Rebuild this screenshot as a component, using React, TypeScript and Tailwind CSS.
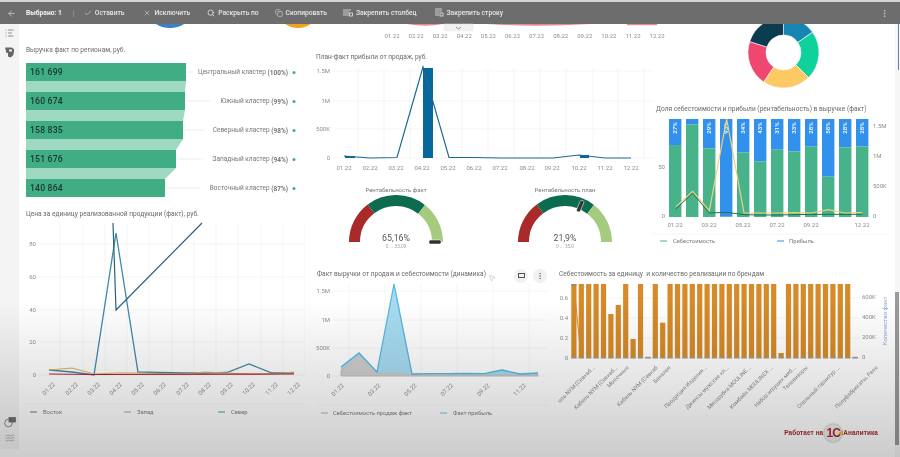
import React from "react";
import { ArrowLeft, Check, Copy, MoreVertical, MousePointer2, Search, Waves, X } from "lucide-react";

const GRID = "#eeeeee";
const TICK = "#8c8c8c";
const MONTHS = ["01.22", "02.22", "03.22", "04.22", "05.22", "06.22", "07.22", "08.22", "09.22", "10.22", "11.22", "12.22"];

const pts = (list: number[][]) => list.map((p) => p.join(",")).join(" ");

const Tick = ({ x, y, children, anchor = "middle", rotate }: { x: number; y: number; children: React.ReactNode; anchor?: "start" | "middle" | "end"; rotate?: number }) => (
  <text x={x} y={y} fontSize={6} fill={TICK} textAnchor={anchor} dominantBaseline="middle" transform={rotate ? `rotate(${rotate} ${x} ${y})` : undefined}>
    {children}
  </text>
);

const Title = ({ children, className = "" }: { children: React.ReactNode; className?: string }) => (
  <div className={`text-[6.6px] leading-[12px] text-[#6a6a6a] whitespace-nowrap ${className}`}>{children}</div>
);

const ToolItem = ({ icon, label, className = "" }: { icon: React.ReactNode; label: string; className?: string }) => (
  <div className={`flex items-center gap-[3px] ${className}`}>
    {icon}
    <span>{label}</span>
  </div>
);

const Toolbar = () => (
  <div className="h-[22px] shrink-0 bg-[#6d6d6d] flex items-center text-[6.7px] font-medium text-[#e6e6e6] whitespace-nowrap">
    <ArrowLeft size={9} strokeWidth={1.6} className="ml-[7px]" />
    <span className="ml-[10px] font-bold text-[#f2f2f2]">Выбрано: 1</span>
    <div className="ml-[11px] h-[7px] w-px bg-[#8a8a8a]" />
    <ToolItem className="ml-[10px]" icon={<Check size={8} strokeWidth={1.5} />} label="Оставить" />
    <ToolItem className="ml-[19px]" icon={<X size={8} strokeWidth={1.5} />} label="Исключить" />
    <ToolItem className="ml-[17px]" icon={<Search size={8} strokeWidth={2.4} />} label="Раскрыть по" />
    <ToolItem className="ml-[16px]" icon={<Copy size={8} strokeWidth={1.5} />} label="Скопировать" />
    <ToolItem
      className="ml-[16px]"
      icon={
        <svg width="10" height="9" viewBox="0 0 10 9" fill="none" stroke="#e6e6e6" strokeWidth="0.8">
          <path d="M1 1v7M3 1v7M5 1v7M7 1v2" />
          <rect x="6.5" y="5" width="3" height="3" />
        </svg>
      }
      label="Закрепить столбец"
    />
    <ToolItem
      className="ml-[17px]"
      icon={
        <svg width="10" height="9" viewBox="0 0 10 9" fill="none" stroke="#e6e6e6" strokeWidth="0.8">
          <path d="M1 1h7M1 3h7M1 5h4M1 7h4" />
          <rect x="6" y="5" width="3" height="3" />
        </svg>
      }
      label="Закрепить строку"
    />
    <MoreVertical size={9} strokeWidth={1.6} className="ml-auto mr-[11px]" />
  </div>
);

const Sidebar = () => (
  <aside className="w-[19px] h-[425px] shrink-0 bg-[#f4f4f4] flex flex-col items-center justify-between pt-[5px] pb-[6px] text-[#777777]">
    <div className="flex flex-col items-center gap-[9px]">
      <svg width="9" height="8" viewBox="0 0 9 8" fill="none" stroke="#777777" strokeWidth="0.8">
        <path d="M3 1h5.5M3 4h4M3 7h5.5M0.5 1h1M0.5 4h1M0.5 7h1" />
      </svg>
      <svg width="11" height="12" viewBox="0 0 11 12" fill="#666666">
        <path d="M1 1.5h6.5l2.5 1.5v3l-1 3.5-2.5 2-2.5-1v-3.5H2.5z" />
        <path d="M5 3.5h3v2H5z" fill="#eeeeee" />
      </svg>
    </div>
    <div className="flex flex-col items-center gap-[5px]">
      <svg width="12" height="11" viewBox="0 0 12 11" fill="none" stroke="#6f6f6f" strokeWidth="0.8">
        <circle cx="4.5" cy="6" r="3.8" />
        <rect x="5" y="0.5" width="6.5" height="4.5" fill="#6f6f6f" />
      </svg>
      <Waves size={10} strokeWidth={1.2} />
    </div>
  </aside>
);

const FUNNEL = [
  { value: "161 699", name: "Центральный кластер", pct: "(100%)", right: 186, lineEnd: 193 },
  { value: "160 674", name: "Южный кластер", pct: "(99%)", right: 185, lineEnd: 210 },
  { value: "158 835", name: "Северный кластер", pct: "(98%)", right: 183, lineEnd: 203 },
  { value: "151 676", name: "Западный кластер", pct: "(94%)", right: 176, lineEnd: 203 },
  { value: "140 864", name: "Восточный кластер", pct: "(87%)", right: 165, lineEnd: 200 },
];

const Funnel = () => (
  <svg viewBox="19 57 286 148" width={286} height={148}>
    {FUNNEL.map((row, i) => {
      const top = 64 + i * 29;
      const next = FUNNEL[i + 1];
      return (
        <g key={row.name}>
          {next && <polygon points={pts([[26, top + 18], [row.right, top + 18], [next.right, top + 29], [26, top + 29]])} fill="#9fd9c2" />}
          <rect x={26} y={top} width={row.right - 26} height={18} fill="#41ad85" />
          <text x={30} y={top + 9.5} fontSize={8.6} fontWeight={500} letterSpacing={0.2} fill="#17362c" dominantBaseline="middle">
            {row.value}
          </text>
          <line x1={row.right + 1} x2={row.lineEnd} y1={top + 9} y2={top + 9} stroke="#e2e2e2" strokeWidth={0.6} />
          <text x={288} y={top + 9.5} fontSize={6.5} fill="#777777" textAnchor="end" dominantBaseline="middle">
            {row.name} <tspan fontWeight={700}>{row.pct}</tspan>
          </text>
          <circle cx={294} cy={top + 9.5} r={1.5} fill="#41ad85" />
        </g>
      );
    })}
  </svg>
);

const PRICE_X = [49, 72, 94, 116, 138, 160, 183, 205, 227, 249, 272, 294];

const Legend = ({ items, y }: { items: { x: number; color: string; label: string; text: number }[]; y: number }) => (
  <>
    {items.map((it) => (
      <g key={it.label}>
        <line x1={it.x} x2={it.x + 7} y1={y} y2={y} stroke={it.color} strokeWidth={1} />
        <text x={it.text} y={y} fontSize={5.8} fill="#7a7a7a" dominantBaseline="middle">
          {it.label}
        </text>
      </g>
    ))}
  </>
);

const PriceChart = () => (
  <svg viewBox="19 221 286 236" width={286} height={236}>
    {[245, 278, 311, 343, 376].map((y, i) => (
      <g key={y}>
        <line x1={38} x2={304} y1={y} y2={y} stroke={GRID} strokeWidth={0.6} />
        <Tick x={36} y={y} anchor="end">{[80, 60, 40, 20, 0][i]}</Tick>
      </g>
    ))}
    {[60, 83, 105, 127, 149, 172, 194, 216, 238, 261, 283, 305].map((x) => (
      <line key={x} x1={x} x2={x} y1={225} y2={376} stroke={GRID} strokeWidth={0.6} />
    ))}
    <polyline fill="none" stroke="#3f8aa8" strokeWidth={1.3} points={pts([[49, 371], [72, 373], [94, 376], [116, 234], [138, 373], [160, 373.5], [183, 374], [205, 374], [227, 373.5], [249, 365], [272, 374], [294, 374]])} />
    <polyline fill="none" stroke="#2c6080" strokeWidth={1.2} points={pts([[113, 224], [116, 311], [202, 224]])} />
    <polyline fill="none" stroke="#e0b45a" strokeWidth={1.2} points={pts([[49, 371], [72, 369], [94, 375], [116, 374], [138, 374], [160, 374.5], [183, 375], [205, 373], [227, 374], [249, 375], [272, 375], [294, 373]])} />
    <polyline fill="none" stroke="#b2203f" strokeWidth={1.2} points={pts([[49, 375], [94, 375.5], [294, 375]])} />
    {MONTHS.map((m, i) => (
      <Tick key={m} x={PRICE_X[i]} y={390} rotate={-45}>{m}</Tick>
    ))}
    <line x1={26} x2={305} y1={405} y2={405} stroke={GRID} strokeWidth={0.6} />
    <Legend
      y={413}
      items={[
        { x: 30, color: "#4f7f9a", label: "Восток", text: 43 },
        { x: 124, color: "#7fb4c8", label: "Запад", text: 137 },
        { x: 218, color: "#4f9a96", label: "Север", text: 231 },
      ]}
    />
  </svg>
);

const TopStrip = () => (
  <svg viewBox="305 24 365 18" width={365} height={18} className="overflow-visible">
    <path d="M407 24q18 3.5 36 0zM487 24q50 3.5 103 0zM627 24h30v1.2h-30z" fill="#e88a8a" />
    <path d="M444 24h29v5a2 2 0 0 1-2 2h-25a2 2 0 0 1-2-2z" fill="#f1f1f1" stroke="#e4e4e4" strokeWidth={0.5} />
    <path d="M456 27l2.5 2 2.5-2" fill="none" stroke="#666666" strokeWidth={0.7} />
    {MONTHS.map((m, i) => (
      <Tick key={m} x={392 + i * 24.1} y={36}>{m}</Tick>
    ))}
  </svg>
);

const PLAN_X = [344, 370, 396, 422, 448, 474, 500, 527, 552, 579, 605, 631];

const PlanChart = () => (
  <svg viewBox="305 63 349 112" width={349} height={112}>
    {[71, 101, 129, 158].map((y, i) => (
      <g key={y}>
        <line x1={333} x2={654} y1={y} y2={y} stroke={GRID} strokeWidth={0.6} />
        <Tick x={330} y={y} anchor="end">{["1.5M", "1M", "500K", "0"][i]}</Tick>
      </g>
    ))}
    {[358, 384, 410, 436, 462, 488, 514, 540, 566, 593, 618, 644].map((x) => (
      <line key={x} x1={x} x2={x} y1={68} y2={158} stroke={GRID} strokeWidth={0.6} />
    ))}
    <rect x={345} y={156} width={10} height={2} fill="#08689c" />
    <rect x={423} y={68} width={10} height={90} fill="#08689c" />
    <rect x={580} y={155} width={9} height={3} fill="#08689c" />
    <polyline fill="none" stroke="#1d6a96" strokeWidth={1.2} points={pts([[344, 156], [370, 158], [397, 157.5], [423, 67], [449, 157.5], [475, 157.5], [501, 158], [527, 158], [553, 158], [579, 155], [605, 158], [631, 158]])} />
    {MONTHS.map((m, i) => (
      <Tick key={m} x={PLAN_X[i]} y={168}>{m}</Tick>
    ))}
  </svg>
);

const arc = (from: number, to: number, r: number, inner: number, cx = 0, cy = 0) => {
  const rad = (a: number) => (a * Math.PI) / 180;
  const p = (a: number, rr: number) => `${(cx + rr * Math.cos(rad(a))).toFixed(2)} ${(cy - rr * Math.sin(rad(a))).toFixed(2)}`;
  const large = Math.abs(from - to) > 180 ? 1 : 0;
  return `M${p(from, r)}A${r} ${r} 0 ${large} 1 ${p(to, r)}L${p(to, inner)}A${inner} ${inner} 0 ${large} 0 ${p(from, inner)}Z`;
};

const Gauge = ({ title, value, range, needle }: { title: string; value: string; range: string; needle: number }) => (
  <div className="w-[110px] shrink-0 flex flex-col items-center">
    <div className="text-[6px] leading-[10px] mt-[1px] text-[#777777] whitespace-nowrap">{title}</div>
    <svg viewBox="-55 -47 110 55" width={110} height={55}>
      <path d={arc(180, 127, 47, 36)} fill="#a82a2b" />
      <path d={arc(127, 52, 47, 36)} fill="#0d6b4f" />
      <path d={arc(52, 0, 47, 36)} fill="#a5cc7e" />
      <rect x={33} y={-2} width={12} height={4} rx={1.5} fill="#333333" stroke="#ffffff" strokeWidth={0.5} transform={`rotate(${-needle})`} />
      <text x={0} y={-3} fontSize={8.8} fill="#555555" textAnchor="middle" dominantBaseline="middle">{value}</text>
      <text x={0} y={4.5} fontSize={4.8} fill="#a8a8a8" textAnchor="middle" dominantBaseline="middle">{range}</text>
    </svg>
  </div>
);

const DONUT = [
  { from: 90, to: 35, color: "#1685b0" },
  { from: 35, to: -45, color: "#0fd19b" },
  { from: -45, to: -124, color: "#fdc964" },
  { from: -124, to: -198, color: "#ef476f" },
  { from: -198, to: -270, color: "#0b3c50" },
];

const Donut = () => (
  <svg viewBox="748 24 71 65" width={71} height={65} className="ml-[98px]">
    {DONUT.map((s) => (
      <path key={s.color} d={arc(s.from, s.to, 35.5, 17.5, 783.5, 52.5)} fill={s.color} stroke="#ffffff" strokeWidth={0.6} />
    ))}
  </svg>
);

const SPLITS = [438, 376, 448, 653, 460, 487, 452, 457, 443, 533, 445, 442];
const SHARE = ["27%", "", "29%", "93%", "34%", "43%", "31%", "33%", "28%", "58%", "28%", "28%"];
const zoom3 = (list: number[][]) => list.map(([x, y]) => [640 + x / 3, y / 3]);

const ShareChart = () => (
  <svg viewBox="650 116 245 134" width={245} height={134}>
    {SPLITS.map((s, i) => {
      const x = 669 + i * 17;
      return (
        <g key={i}>
          <rect x={x} y={120} width={12.4} height={s / 3 - 120} fill="#3391ee" />
          <rect x={x} y={s / 3} width={12.4} height={218 - s / 3} fill="#48b28a" />
          {SHARE[i] && (
            <text x={x + 6.2} y={129} fontSize={6} fontWeight={500} fill="#ffffff" textAnchor="middle" dominantBaseline="middle" transform={`rotate(-90 ${x + 6.2} 129)`}>
              {SHARE[i]}
            </text>
          )}
        </g>
      );
    })}
    <polyline fill="none" stroke="#1f6d58" strokeWidth={1} points={pts(zoom3([[108, 630], [158, 582], [208, 642], [260, 640], [312, 647], [362, 648], [412, 648], [462, 647], [514, 646], [565, 646], [615, 646], [666, 646]]))} />
    <polyline fill="none" stroke="#eed27f" strokeWidth={1.2} points={pts(zoom3([[108, 623], [158, 577], [208, 635], [260, 360], [312, 642], [362, 642], [412, 642], [462, 641], [514, 642], [565, 632], [615, 642], [666, 641]]))} />
    <Tick x={665} y={168} anchor="end">50</Tick>
    <Tick x={665} y={217} anchor="end">0</Tick>
    {["1.5M", "1M", "500K", "0"].map((t, i) => (
      <Tick key={t} x={873} y={127 + i * 30} anchor="start">{t}</Tick>
    ))}
    {[["01.22", 675], ["03.22", 709], ["05.22", 743], ["07.22", 777], ["09.22", 811], ["12.22", 862]].map(([m, x]) => (
      <Tick key={m} x={x as number} y={226}>{m}</Tick>
    ))}
    <line x1={653} x2={890} y1={235} y2={235} stroke={GRID} strokeWidth={0.6} />
    <Legend
      y={242}
      items={[
        { x: 660, color: "#48b28a", label: "Себестоимость", text: 673 },
        { x: 777, color: "#3391ee", label: "Прибыль", text: 789 },
      ]}
    />
  </svg>
);

const DYN_X = [341, 359, 377, 394, 412, 430, 448, 466, 484, 502, 520, 538];
const DYN_BLUE = [367, 353, 372, 284, 374, 373.7, 373.7, 373.5, 373.7, 370, 374, 373];
const DYN_GRAY = [370, 355, 373, 372.7, 374, 374.5, 374.5, 374.5, 374.5, 374.5, 374.5, 374.5];

const DynamicsChart = () => (
  <svg viewBox="305 283 253 174" width={253} height={174}>
    {[291, 320, 348, 376].map((y, i) => (
      <g key={y}>
        <line x1={332} x2={548} y1={y} y2={y} stroke={GRID} strokeWidth={0.6} />
        <Tick x={330} y={y} anchor="end">{["1.5M", "1M", "500K", "0"][i]}</Tick>
      </g>
    ))}
    {[349, 385, 421, 457, 493, 529].map((x) => (
      <line key={x} x1={x} x2={x} y1={284} y2={376} stroke={GRID} strokeWidth={0.6} />
    ))}
    <polygon points={pts([...DYN_X.map((x, i) => [x, DYN_GRAY[i]]), [538, 376], [341, 376]])} fill="#cfcccc" stroke="#b5b5b5" strokeWidth={0.8} />
    <polygon points={pts([...DYN_X.map((x, i) => [x, DYN_BLUE[i]]), ...[...DYN_X].reverse().map((x, i) => [x, DYN_GRAY[11 - i]])])} fill="#a6dbf1" />
    <polyline fill="none" stroke="#58b8de" strokeWidth={1.3} points={pts(DYN_X.map((x, i) => [x, DYN_BLUE[i]]))} />
    {["01.22", "03.22", "05.22", "07.22", "09.22", "11.22"].map((m, i) => (
      <Tick key={m} x={338 + i * 36.4} y={390} rotate={-45}>{m}</Tick>
    ))}
    <line x1={317} x2={548} y1={405} y2={405} stroke={GRID} strokeWidth={0.6} />
    <Legend
      y={413}
      items={[
        { x: 321, color: "#b0b0b0", label: "Себестоимость продаж факт", text: 333 },
        { x: 440, color: "#6dbfdf", label: "Факт прибыль", text: 453 },
      ]}
    />
  </svg>
);

// top of each bar where it differs from the full height
const BRAND_TOPS: Record<number, number> = { 5: 314, 6: 305, 8: 339, 10: 357, 12: 322.7, 28: 353, 38: 357 };
const BRAND_LABELS: [string, number][] = [
  ["ель NYM (Севкаб...", 595],
  ["Кабель NYM (Севкаб...", 618],
  ["Молочные", 629],
  ["Кабель NYM (Севкаб", 658],
  ["Бакалея", 671],
  ["Продукция Изделия...", 707],
  ["Джинсы мужские кл...", 729],
  ["Мясорубка MOULINE...", 751],
  ["Комбайн MOULINEX ...", 773],
  ["Набор игрушек мяб...", 796],
  ["Телевизоры", 808],
  ["Спальный гарнитур ...", 840],
  ["Полуфабрикаты, Реле", 878],
];

const BrandChart = () => (
  <svg viewBox="550 280 345 140" width={345} height={140} className="-ml-[8px]">
    {[298, 318, 338, 358].map((y) => (
      <line key={y} x1={571} x2={860} y1={y} y2={y} stroke={GRID} strokeWidth={0.6} />
    ))}
    {Array.from({ length: 39 }, (_, i) => {
      const x = 571.3 + i * 7.4;
      const top = BRAND_TOPS[i] ?? 284;
      const orange = i === 10 || i === 38 ? "#8d8d8d" : "#d68a28";
      return (
        <g key={i}>
          <rect x={x} y={top} width={5.2} height={358.3 - top} fill={orange} />
          <rect x={x} y={356.8} width={5.2} height={1.5} fill="#a39a8a" />
        </g>
      );
    })}
    <rect x={571.3} y={284} width={5.2} height={1.5} fill="#8d8d8d" />
    <polyline fill="none" stroke="#d68a28" strokeWidth={1} points="574,285 581,357" />
    {["0.6", "0.4", "0.2", "0"].map((t, i) => (
      <Tick key={t} x={568} y={298 + i * 20} anchor="end">{t}</Tick>
    ))}
    {["600K", "400K", "200K", "0"].map((t, i) => (
      <Tick key={t} x={862} y={297 + i * 20.3} anchor="start">{t}</Tick>
    ))}
    <text x={885} y={321} fontSize={6} fill="#8ea6d8" textAnchor="middle" dominantBaseline="middle" transform="rotate(-90 885 321)">
      Количество факт
    </text>
    {BRAND_LABELS.map(([label, x], i) => (
      <text key={i} x={x} y={368} fontSize={5.6} fill={TICK} textAnchor="end" transform={`rotate(-45 ${x} 368)`}>
        {label}
      </text>
    ))}
  </svg>
);

const Logo = () => (
  <div className="flex items-center justify-end pr-[17px] mt-[4px] font-['Liberation_Sans',sans-serif] font-bold text-[6.4px] tracking-[0.1px] text-[#a3282b] whitespace-nowrap">
    <span>Работает на</span>
    <div className="relative ml-[1px] w-[18px] h-[18px] rounded-full bg-[#ededed] shadow-[0_0_2px_#999999] flex items-center justify-center text-[12px] tracking-[-1px] text-[#b5252a]">
      1С
      <div className="absolute right-[-1px] top-[6px] w-[5px] h-[6px] bg-[#f0b92c] [clip-path:polygon(0_50%,100%_0,100%_100%)]" />
    </div>
    <span className="ml-[1px]">Аналитика</span>
  </div>
);

export default function App() {
  return (
    <div className="relative w-[900px] h-[457px] overflow-hidden bg-white flex flex-col font-['Roboto',sans-serif] blur-[0.35px]">
      <div className="h-[2px] shrink-0 bg-[#d4d4d4]" />
      <Toolbar />
      <div className="flex flex-1 min-h-0">
        <Sidebar />
        <main className="flex flex-1 min-w-0">
          <section className="w-[286px] shrink-0 relative">
            <svg viewBox="19 24 300 6" width={300} height={6} className="absolute top-0 left-0">
              <ellipse cx={170} cy={14} rx={20} ry={14} fill="#3b7fc4" />
              <ellipse cx={298} cy={14} rx={18} ry={14} fill="#f0a21e" />
            </svg>
            <Title className="pt-[20px] pl-[7px]">Выручка факт по регионам, руб.</Title>
            <Funnel />
            <Title className="mt-[4px] pl-[7px]">Цена за единицу реализованной продукции (факт), руб.</Title>
            <PriceChart />
          </section>
          <div className="w-[590px] shrink-0 flex flex-col">
            <div className="h-[238px] shrink-0 flex">
              <section className="w-[345px] shrink-0">
                <TopStrip />
                <Title className="mt-[9px] pl-[11px]">План-факт прибыли от продаж, руб.</Title>
                <PlanChart />
                <div className="flex gap-[59px] pl-[36px] mt-[9px]">
                  <Gauge title="Рентабельность факт" value="65,16%" range="0 ... 35,00" needle={0} />
                  <Gauge title="Рентабельность план" value="21,9%" range="0 ... 35,0" needle={67} />
                </div>
              </section>
              <section className="flex-1 min-w-0">
                <Donut />
                <Title className="mt-[14px] pl-[6px]">Доля себестоимости и прибыли (рентабельность) в выручке (факт)</Title>
                <ShareChart />
              </section>
            </div>
            <div className="flex-1 min-h-0 flex">
              <section className="w-[253px] shrink-0">
                <div className="flex items-center h-[15px] mt-[6px] pl-[12px]">
                  <Title className="-mt-[3px]">Факт выручки от продаж и себестоимости (динамика)</Title>
                  <MousePointer2 size={8} strokeWidth={1} className="ml-[2px] mt-[5px] text-[#888888]" />
                  <div className="ml-auto mr-[11px] flex gap-[5px]">
                    <div className="w-[14px] h-[14px] rounded-full bg-[#f1f1f1] flex items-center justify-center">
                      <div className="w-[7px] h-[5px] border border-[#555555]" />
                    </div>
                    <div className="w-[14px] h-[14px] rounded-full bg-[#f1f1f1] flex items-center justify-center">
                      <MoreVertical size={8} strokeWidth={1.6} className="text-[#555555]" />
                    </div>
                  </div>
                </div>
                <DynamicsChart />
              </section>
              <section className="flex-1 min-w-0">
                <Title className="mt-[6px] pl-[1px]">Себестоимость за единицу&nbsp; и количество реализации по брендам</Title>
                <BrandChart />
                <Logo />
              </section>
            </div>
          </div>
          <div className="relative flex-1 bg-[#f6f6f6]">
            <div className="absolute top-0 right-[1px] w-[1px] h-[46px] bg-[#6f7f9f]" />
            <div className="absolute top-[268px] left-0 right-[1px] h-[153px] bg-[#9a9a9a]" />
          </div>
        </main>
      </div>
      <div className="absolute left-0 right-0 bottom-0 h-[157px] bg-linear-to-b from-transparent to-black/20 pointer-events-none" />
    </div>
  );
}
